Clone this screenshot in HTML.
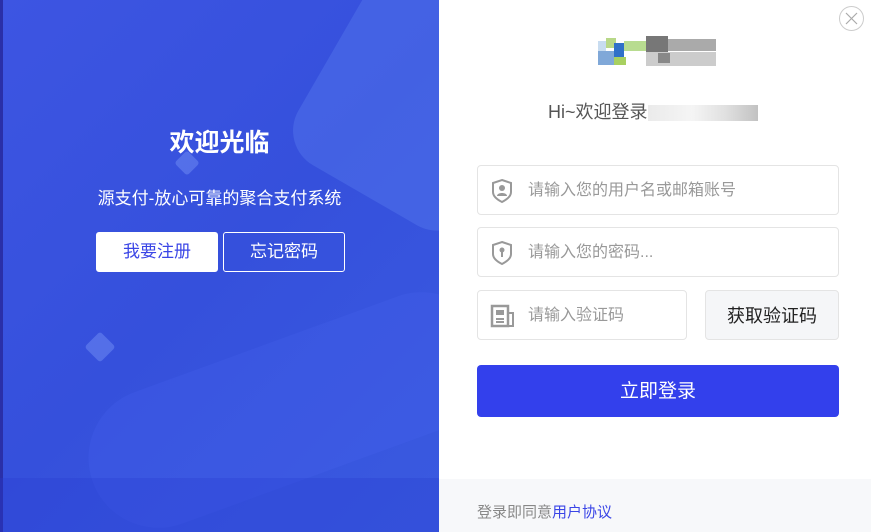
<!DOCTYPE html>
<html><head><meta charset="utf-8"><style>
*{margin:0;padding:0;box-sizing:border-box}
body{width:871px;height:532px;overflow:hidden;font-family:"Liberation Sans","Noto Sans CJK SC",sans-serif;background:#fff;position:relative}
.left{position:absolute;left:0;top:0;width:439px;height:532px;background:linear-gradient(135deg,#3d55e2 0%,#3550dc 50%,#3a5ae0 100%);overflow:hidden}
.left:before{content:"";position:absolute;left:0;top:0;width:3px;height:532px;background:#2a2fa8}
.blob{position:absolute;left:320px;top:-10px;width:200px;height:220px;border-radius:40px;background:rgba(120,160,255,.22);transform:rotate(30deg)}
.blob2{position:absolute;left:80px;top:340px;width:420px;height:140px;border-radius:70px;background:rgba(70,100,240,.25);transform:rotate(-20deg)}
.band{position:absolute;left:0;top:478px;width:439px;height:54px;background:rgba(40,60,210,.3)}
.sq{position:absolute;background:rgba(140,170,255,.35);transform:rotate(45deg);border-radius:3px}
.title{position:absolute;left:0;width:439px;top:123px;text-align:center;color:#fff;font-size:25px;font-weight:bold}
.sub{position:absolute;left:0;width:439px;top:184px;text-align:center;color:#fff;font-size:17px}
.btn{position:absolute;top:232px;width:122px;height:40px;border-radius:3px;font-size:17px;text-align:center;line-height:38px}
.b1{left:96px;background:#fff;color:#3a45e6;border:1px solid #fff}
.b2{left:223px;border:1px solid #fff;color:#fff}
.close{position:absolute;left:839px;top:6px;width:25px;height:25px;border:1px solid #ccc;border-radius:50%}
.logo{position:absolute;left:598px;top:33px;width:120px;height:40px}
.hi{position:absolute;left:548px;top:98px;font-size:18px;color:#555}
.inp{position:absolute;border:1px solid #e4e4e4;border-radius:4px;background:#fff;font-size:16px;color:#999;line-height:50px;padding-left:50px}
.inp svg{position:absolute;left:12px;top:12px}
.getc{position:absolute;left:705px;top:290px;width:134px;height:50px;background:#f5f6f8;border:1px solid #e4e4e4;border-radius:4px;font-size:18px;color:#222;text-align:center;line-height:50px}
.login{position:absolute;left:477px;top:365px;width:362px;height:52px;background:#3340ec;border-radius:4px;color:#fff;font-size:19px;text-align:center;line-height:54px}
.foot{position:absolute;left:439px;top:479px;width:432px;height:53px;background:#f7f8fa;font-size:15px;color:#888;padding:22px 0 0 38px}
.foot span{color:#3a45e6}
</style></head><body>
<div class="left">
<div class="blob"></div><div class="blob2"></div><div class="band"></div>
<div class="sq" style="left:178px;top:154px;width:18px;height:18px"></div>
<div class="sq" style="left:89px;top:336px;width:22px;height:22px"></div>
<div class="title">欢迎光临</div>
<div class="sub">源支付-放心可靠的聚合支付系统</div>
<div class="btn b1">我要注册</div>
<div class="btn b2">忘记密码</div>
</div>
<div class="close"><svg width="23" height="23" viewBox="0 0 23 23"><path d="M6 6L17 17M17 6L6 17" stroke="#aaa" stroke-width="1.2"/></svg></div>
<svg class="logo" viewBox="0 0 120 40">
<rect x="0" y="8" width="8" height="10" fill="#c8dcf0"/><rect x="8" y="5" width="10" height="10" fill="#b8d888"/><rect x="16" y="10" width="10" height="14" fill="#3070c8"/><rect x="26" y="8" width="24" height="10" fill="#b8dc90"/><rect x="0" y="18" width="16" height="14" fill="#80a8d8"/><rect x="16" y="24" width="12" height="8" fill="#a8d060"/>
<rect x="48" y="3" width="22" height="16" fill="#777"/><rect x="70" y="6" width="48" height="12" fill="#aaa"/><rect x="48" y="19" width="70" height="14" fill="#ccc"/><rect x="60" y="20" width="12" height="10" fill="#888"/>
</svg>
<div class="hi">Hi~欢迎登录<span style="display:inline-block;width:110px;height:16px;background:linear-gradient(90deg,#ddd,#eee 40%,#ccc 70%,#999);vertical-align:middle;opacity:.6"></span></div>
<div class="inp" style="left:477px;top:165px;width:362px;height:50px">请输入您的用户名或邮箱账号
<svg width="24" height="26" viewBox="0 0 24 26"><path d="M12 2L21 5V14C21 19 16 22 12 24C8 22 3 19 3 14V5Z" fill="none" stroke="#999" stroke-width="2"/><circle cx="12" cy="10" r="3" fill="#999"/><path d="M7 18C7 14 17 14 17 18Z" fill="#999"/></svg></div>
<div class="inp" style="left:477px;top:227px;width:362px;height:50px">请输入您的密码...
<svg width="24" height="26" viewBox="0 0 24 26"><path d="M12 2L21 5V14C21 19 16 22 12 24C8 22 3 19 3 14V5Z" fill="none" stroke="#999" stroke-width="2"/><circle cx="12" cy="10" r="2.5" fill="#999"/><rect x="11" y="11" width="2" height="6" fill="#999"/></svg></div>
<div class="inp" style="left:477px;top:290px;width:210px;height:50px">请输入验证码
<svg width="26" height="26" viewBox="0 0 26 26"><rect x="2" y="3" width="16" height="20" fill="none" stroke="#999" stroke-width="2.5"/><rect x="6" y="7" width="8" height="5" fill="#999"/><path d="M6 16H14M6 19H14M18 10H23V23H18" stroke="#999" stroke-width="2" fill="none"/></svg></div>
<div class="getc">获取验证码</div>
<div class="login">立即登录</div>
<div class="foot">登录即同意<span>用户协议</span></div>
</body></html>
